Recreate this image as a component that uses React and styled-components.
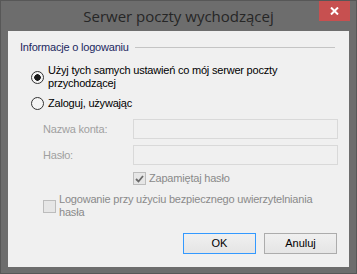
import styled, { createGlobalStyle } from "styled-components";

const GlobalStyle = createGlobalStyle`
  html, body {
    margin: 0;
    padding: 0;
    background: #6d6d6d;
  }
  body {
    font-family: "Liberation Sans", Arial, sans-serif;
  }
`;

const Window = styled.div`
  width: 357px;
  height: 274px;
  box-sizing: border-box;
  border: 1px solid #575757;
  background: #6d6d6d;
  display: flex;
  flex-direction: column;
  padding: 0 7px 6px;
`;

const TitleBar = styled.div`
  display: grid;
  grid-template-columns: 1fr auto 1fr;
  height: 30px;
  align-items: start;
`;

const Title = styled.div`
  grid-column: 2;
  font-family: "Open Sans", "Noto Sans", sans-serif;
  font-size: 15px;
  line-height: 30px;
  color: #262626;
  white-space: nowrap;
`;

const CloseButton = styled.div`
  grid-column: 3;
  justify-self: end;
  width: 31px;
  height: 20px;
  margin-right: -1px;
  background: #c75050;
  display: flex;
  align-items: center;
  justify-content: center;
`;

const Panel = styled.div`
  flex: 1;
  background: #f0f0f0;
  display: flex;
  flex-direction: column;
  font-size: 11px;
  letter-spacing: -0.2px;
  line-height: 13px;
  color: #000;
`;

const GroupHeader = styled.div`
  display: flex;
  align-items: center;
  gap: 6px;
  margin: 10px 14px 0 12px;
  color: #1c2860;

  &::after {
    content: "";
    flex: 1;
    border-top: 1px solid #c4c4c4;
  }
`;

const OptionRow = styled.div`
  display: flex;
  align-items: center;
  gap: ${(p) => p.$gap || 4}px;
  margin-left: ${(p) => p.$indent}px;
  margin-top: ${(p) => p.$top}px;
  color: ${(p) => (p.$disabled ? "#8a8a8a" : "#000")};
`;

const Radio = styled.span`
  flex: none;
  width: 13px;
  height: 13px;
  box-sizing: border-box;
  border-radius: 50%;
  border: 1px solid #333;
  background: ${(p) =>
    p.$checked
      ? "radial-gradient(circle, #1a1a1a 0 3px, #f4f4f4 3.5px)"
      : "#f4f4f4"};
`;

const CheckBox = styled.span`
  flex: none;
  width: 13px;
  height: 13px;
  box-sizing: border-box;
  border: 1px solid #bcbcbc;
  background: #e6e6e6;
  display: flex;
  align-items: center;
  justify-content: center;
`;

const FieldRow = styled.div`
  display: grid;
  grid-template-columns: 90px 205px;
  align-items: center;
  margin-left: 35px;
  margin-top: ${(p) => p.$top}px;
`;

const FieldLabel = styled.span`
  color: #a0a0a0;
`;

const Input = styled.div`
  height: 20px;
  box-sizing: border-box;
  border: 1px solid #d9d9d9;
  background: #f0f0f0;
`;

const ButtonRow = styled.div`
  display: flex;
  justify-content: flex-end;
  gap: 8px;
  margin-top: 14px;
  padding-right: 12px;
`;

const Button = styled.div`
  width: 73px;
  height: 21px;
  box-sizing: border-box;
  border: 1px solid ${(p) => (p.$primary ? "#3399ff" : "#acacac")};
  background: linear-gradient(#f0f0f0, #e5e5e5);
  display: flex;
  align-items: center;
  justify-content: center;
  letter-spacing: 0;
`;

function App() {
  return (
    <>
      <GlobalStyle />
      <Window>
        <TitleBar>
          <Title>Serwer poczty wychodzącej</Title>
          <CloseButton>
            <svg width="9" height="8" viewBox="0 0 9 8">
              <path
                d="M1 0.5 L8 7.5 M8 0.5 L1 7.5"
                stroke="#fff"
                strokeWidth="2"
              />
            </svg>
          </CloseButton>
        </TitleBar>
        <Panel>
          <GroupHeader>Informacje o logowaniu</GroupHeader>
          <OptionRow $indent={23} $top={10}>
            <Radio $checked />
            <span>
              Użyj tych samych ustawień co mój serwer poczty
              <br />
              przychodzącej
            </span>
          </OptionRow>
          <OptionRow $indent={23} $top={7}>
            <Radio />
            <span>Zaloguj, używając</span>
          </OptionRow>
          <FieldRow $top={9}>
            <FieldLabel>Nazwa konta:</FieldLabel>
            <Input />
          </FieldRow>
          <FieldRow $top={6}>
            <FieldLabel>Hasło:</FieldLabel>
            <Input />
          </FieldRow>
          <OptionRow $indent={125} $top={7} $gap={3} $disabled>
            <CheckBox>
              <svg width="9" height="8" viewBox="0 0 9 8">
                <path
                  d="M1 4 L3.5 6.5 L8 1"
                  fill="none"
                  stroke="#6a6a6a"
                  strokeWidth="1.8"
                />
              </svg>
            </CheckBox>
            <span>Zapamiętaj hasło</span>
          </OptionRow>
          <OptionRow $indent={35} $top={8} $gap={3} $disabled>
            <CheckBox />
            <span>
              Logowanie przy użyciu bezpiecznego uwierzytelniania
              <br />
              hasła
            </span>
          </OptionRow>
          <ButtonRow>
            <Button $primary>OK</Button>
            <Button>Anuluj</Button>
          </ButtonRow>
        </Panel>
      </Window>
    </>
  );
}

export default App;
